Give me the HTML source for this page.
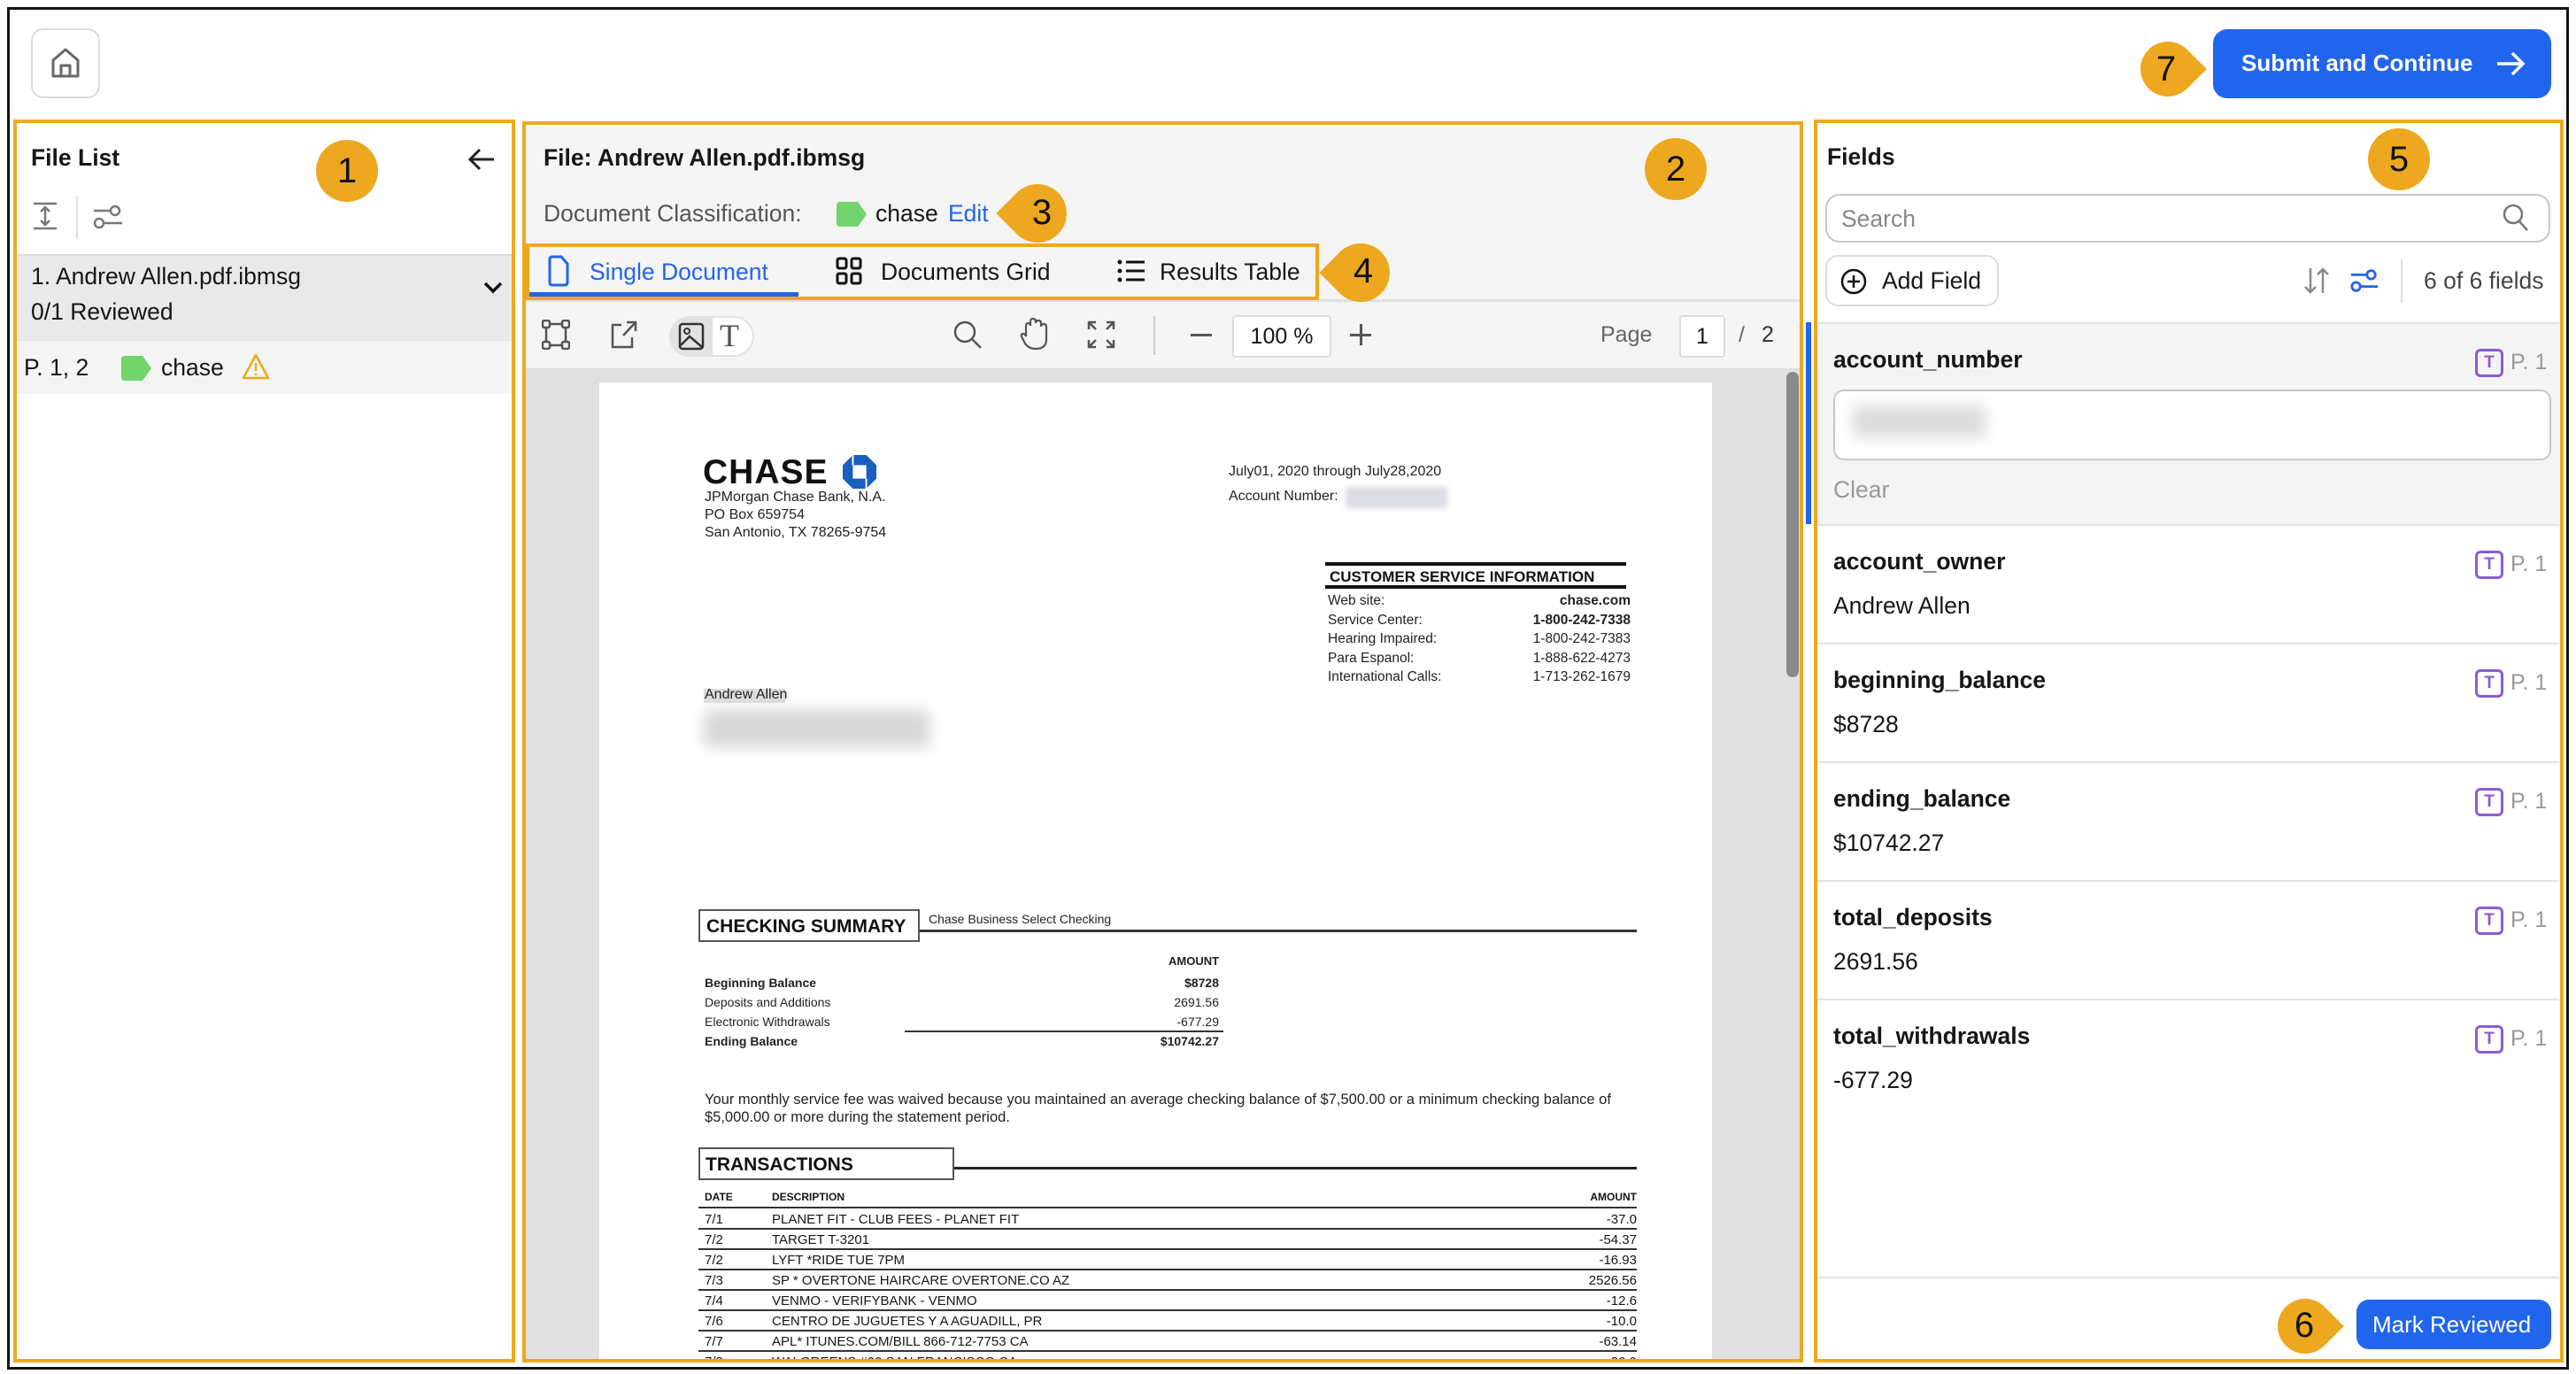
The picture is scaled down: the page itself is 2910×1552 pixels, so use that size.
<!DOCTYPE html>
<html><head><meta charset="utf-8">
<style>
*{box-sizing:border-box;margin:0;padding:0}
body{width:2910px;height:1552px;background:#fff;font-family:"Liberation Sans",Arial,sans-serif;color:#161616;position:relative;overflow:hidden}
.a{position:absolute}
.t{position:absolute;white-space:nowrap}
.b{font-weight:bold}
.badge{position:absolute;width:70px;height:70px;background:#EDA81F;border-radius:50%;font-size:40px;color:#111;display:flex;align-items:center;justify-content:center}
.tl{position:absolute;width:66px;height:66px;background:#EDA81F;border-radius:50% 50% 50% 0;transform:rotate(45deg)}
.tr{position:absolute;width:62px;height:62px;background:#EDA81F;border-radius:50% 0 50% 50%;transform:rotate(45deg)}
.num{position:absolute;font-size:40px;color:#111;width:66px;text-align:center}
.doc{position:absolute;white-space:nowrap;font-family:"Liberation Sans",Arial,sans-serif;color:#222}
.row{position:absolute;left:2049px;width:846px;border-top:2px solid #e2e2e2}
.fl{position:absolute;left:22px;font-size:26.5px;font-weight:bold;color:#161616}
.fv{position:absolute;left:22px;font-size:26.5px;color:#161616}
.ti{position:absolute;left:751px;width:32px;height:32px;border:3px solid #8a5cd6;border-radius:6px;color:#8a5cd6;font-size:19px;font-weight:bold;text-align:center;line-height:26px}
.pg{position:absolute;left:792px;font-size:25px;color:#9a9a9a}
.tx{position:absolute;left:789px;width:1060px;height:23px;border-bottom:2px solid #333;font-size:15px}
.tx span{position:absolute;top:3px}
.ui{font-size:26.5px}
</style></head><body>
<div class="a" style="left:8px;top:8px;width:2894px;height:1539px;border:3px solid #111"></div>

<div class="a" style="left:35px;top:32px;width:78px;height:79px;border:2px solid #dcdcdc;border-radius:14px;background:#fff"></div>
<svg class="a" style="left:56px;top:52px" width="36" height="38" viewBox="0 0 36 38"><path d="M4 16 L18 4 L32 16 V34 H4 Z M13 34 V22 H23 V34" fill="none" stroke="#666" stroke-width="3" stroke-linejoin="round"/></svg>

<div class="a" style="left:2500px;top:33px;width:382px;height:78px;background:#2165EC;border-radius:16px"></div>
<div class="t b" style="left:2532px;top:56px;font-size:26px;color:#fff">Submit and Continue</div>
<svg class="a" style="left:2818px;top:56px" width="36" height="32" viewBox="0 0 36 32"><path d="M3 16 H32 M20 4 L32 16 L20 28" fill="none" stroke="#fff" stroke-width="3.5"/></svg>
<div class="tr" style="left:2418px;top:47px"></div><div class="num" style="left:2414px;top:56px">7</div>

<!-- LEFT PANEL -->
<div class="a" style="left:15px;top:135px;width:567px;height:1404px;border:4px solid #EDA81F;background:#fff"></div>
<div class="t b ui" style="left:35px;top:163px">File List</div>
<div class="badge" style="left:357px;top:158px">1</div>
<svg class="a" style="left:528px;top:166px" width="32" height="28" viewBox="0 0 32 28"><path d="M30 14 H4 M14 3 L3 14 L14 25" fill="none" stroke="#222" stroke-width="3"/></svg>
<svg class="a" style="left:36px;top:228px" width="30" height="32" viewBox="0 0 30 32"><path d="M2 2 H28 M2 30 H28 M15 7 V25 M10 11 L15 6 L20 11 M10 21 L15 26 L20 21" fill="none" stroke="#777" stroke-width="2.5"/></svg>
<div class="a" style="left:86px;top:222px;width:2px;height:48px;background:#e0e0e0"></div>
<svg class="a" style="left:104px;top:230px" width="36" height="30" viewBox="0 0 36 30"><circle cx="26" cy="8" r="5" fill="none" stroke="#777" stroke-width="2.5"/><circle cx="8" cy="22" r="5" fill="none" stroke="#777" stroke-width="2.5"/><path d="M2 8 H21 M13 22 H34" stroke="#777" stroke-width="2.5"/></svg>
<div class="a" style="left:19px;top:287px;width:559px;height:98px;background:#e9e9e9;border-top:2px solid #dcdcdc"></div>
<div class="t ui" style="left:35px;top:297px">1. Andrew Allen.pdf.ibmsg</div>
<div class="t ui" style="left:35px;top:337px">0/1 Reviewed</div>
<svg class="a" style="left:546px;top:318px" width="22" height="14" viewBox="0 0 22 14"><path d="M2 2 L11 11 L20 2" fill="none" stroke="#111" stroke-width="3.5"/></svg>
<div class="a" style="left:19px;top:385px;width:559px;height:60px;background:#f4f4f4"></div>
<div class="t ui" style="left:27px;top:400px">P. 1, 2</div>
<svg class="a" style="left:137px;top:402px" width="34" height="28" viewBox="0 0 34 28"><path d="M4 0 H24 L34 14 L24 28 H4 Q0 28 0 24 V4 Q0 0 4 0 Z" fill="#72d46c"/></svg>
<div class="t ui" style="left:182px;top:400px">chase</div>
<svg class="a" style="left:273px;top:399px" width="32" height="30" viewBox="0 0 32 30"><path d="M16 2 L30 28 H2 Z" fill="none" stroke="#EDA81F" stroke-width="2.5" stroke-linejoin="round"/><path d="M16 11 V20 M16 23 V25" stroke="#EDA81F" stroke-width="2.5"/></svg>

<!-- CENTER PANEL -->
<div class="a" style="left:590px;top:137px;width:1447px;height:1402px;border:4px solid #EDA81F;background:#f5f5f5"></div>
<div class="t b ui" style="left:614px;top:163px">File: Andrew Allen.pdf.ibmsg</div>
<div class="badge" style="left:1858px;top:156px">2</div>
<div class="t ui" style="left:614px;top:226px;color:#555">Document Classification:</div>
<svg class="a" style="left:945px;top:228px" width="34" height="28" viewBox="0 0 34 28"><path d="M4 0 H24 L34 14 L24 28 H4 Q0 28 0 24 V4 Q0 0 4 0 Z" fill="#72d46c"/></svg>
<div class="t ui" style="left:989px;top:226px">chase</div>
<div class="t ui" style="left:1071px;top:226px;color:#2165EC">Edit</div>
<div class="tl" style="left:1139px;top:208px"></div><div class="num" style="left:1144px;top:218px">3</div>

<div class="a" style="left:594px;top:338px;width:1439px;height:3px;background:#e0e0e0"></div>
<div class="a" style="left:594px;top:275px;width:896px;height:64px;border:4px solid #EDA81F"></div>
<div class="a" style="left:598px;top:330px;width:304px;height:5px;background:#2165EC"></div>
<svg class="a" style="left:618px;top:288px" width="26" height="36" viewBox="0 0 26 36"><path d="M3 5 Q3 2 6 2 H16 L23 10 V31 Q23 34 20 34 H6 Q3 34 3 31 Z" fill="none" stroke="#2165EC" stroke-width="3"/></svg>
<div class="t ui" style="left:666px;top:292px;color:#2165EC">Single Document</div>
<svg class="a" style="left:944px;top:290px" width="30" height="32" viewBox="0 0 30 32"><rect x="2" y="2" width="10" height="11" rx="2" fill="none" stroke="#111" stroke-width="3"/><rect x="18" y="2" width="10" height="11" rx="2" fill="none" stroke="#111" stroke-width="3"/><rect x="2" y="19" width="10" height="11" rx="2" fill="none" stroke="#111" stroke-width="3"/><rect x="18" y="19" width="10" height="11" rx="2" fill="none" stroke="#111" stroke-width="3"/></svg>
<div class="t ui" style="left:995px;top:292px">Documents Grid</div>
<svg class="a" style="left:1262px;top:292px" width="32" height="28" viewBox="0 0 32 28"><circle cx="3" cy="4" r="2.5" fill="#111"/><circle cx="3" cy="14" r="2.5" fill="#111"/><circle cx="3" cy="24" r="2.5" fill="#111"/><path d="M10 4 H31 M10 14 H31 M10 24 H31" stroke="#111" stroke-width="3"/></svg>
<div class="t ui" style="left:1310px;top:292px">Results Table</div>
<div class="tl" style="left:1504px;top:275px"></div><div class="num" style="left:1507px;top:284px">4</div>

<!-- toolbar -->
<svg class="a" style="left:612px;top:361px" width="32" height="34" viewBox="0 0 32 34"><rect x="5" y="5" width="22" height="24" fill="none" stroke="#555" stroke-width="2.5"/><rect x="1" y="1" width="8" height="8" rx="2" fill="#f5f5f5" stroke="#555" stroke-width="2.5"/><rect x="23" y="1" width="8" height="8" rx="2" fill="#f5f5f5" stroke="#555" stroke-width="2.5"/><rect x="1" y="25" width="8" height="8" rx="2" fill="#f5f5f5" stroke="#555" stroke-width="2.5"/><rect x="23" y="25" width="8" height="8" rx="2" fill="#f5f5f5" stroke="#555" stroke-width="2.5"/></svg>
<svg class="a" style="left:688px;top:361px" width="32" height="34" viewBox="0 0 32 34"><path d="M14 6 H4 V31 H26 V20 M16 18 L30 3 M20 3 H30 V13" fill="none" stroke="#555" stroke-width="2.5"/></svg>
<div class="a" style="left:756px;top:357px;width:96px;height:46px;background:#e2e2e2;border-radius:23px"></div>
<div class="a" style="left:805px;top:359px;width:45px;height:42px;background:#fff;border-radius:0 21px 21px 0"></div>
<svg class="a" style="left:766px;top:364px" width="30" height="32" viewBox="0 0 30 32"><rect x="2" y="2" width="26" height="28" rx="3" fill="none" stroke="#333" stroke-width="2.5"/><circle cx="10" cy="10" r="3" fill="none" stroke="#333" stroke-width="2"/><path d="M3 26 L13 16 L27 28" fill="none" stroke="#333" stroke-width="2.5"/></svg>
<div class="t" style="left:813px;top:358px;font-size:36px;color:#555;font-family:'Liberation Serif',serif">T</div>
<svg class="a" style="left:1076px;top:361px" width="34" height="34" viewBox="0 0 34 34"><circle cx="14" cy="14" r="11" fill="none" stroke="#555" stroke-width="2.5"/><path d="M22 22 L32 32" stroke="#555" stroke-width="2.5"/></svg>
<svg class="a" style="left:1152px;top:358px" width="32" height="38" viewBox="0 0 32 38"><path d="M7 22 V10 Q7 7 10 7 Q12 7 12 10 V5 Q12 2 15 2 Q18 2 18 5 V7 Q18 4 21 4 Q24 4 24 7 V11 Q24 8 27 8 Q30 8 30 11 V25 Q30 36 18 36 Q10 36 6 30 L2 22 Q1 19 4 19 Q6 19 7 22 Z" fill="none" stroke="#555" stroke-width="2.2"/></svg>
<svg class="a" style="left:1228px;top:362px" width="32" height="32" viewBox="0 0 32 32"><path d="M2 10 V2 H10 M2 2 L10 10 M22 2 H30 V10 M30 2 L22 10 M2 22 V30 H10 M2 30 L10 22 M30 22 V30 H22 M30 30 L22 22" fill="none" stroke="#555" stroke-width="2.5"/></svg>
<div class="a" style="left:1303px;top:357px;width:2px;height:44px;background:#ccc"></div>
<div class="a" style="left:1345px;top:377px;width:24px;height:3px;background:#555"></div>
<div class="a" style="left:1392px;top:356px;width:112px;height:48px;background:#fff;border:2px solid #ddd;border-radius:4px;font-size:25px;text-align:center;line-height:44px">100 %</div>
<div class="a" style="left:1525px;top:377px;width:24px;height:3px;background:#555"></div>
<div class="a" style="left:1536px;top:366px;width:3px;height:24px;background:#555"></div>
<div class="t" style="left:1808px;top:364px;font-size:25px;color:#666">Page</div>
<div class="a" style="left:1897px;top:356px;width:52px;height:48px;background:#fff;border:2px solid #ddd;border-radius:4px;font-size:25px;text-align:center;line-height:44px">1</div>
<div class="t" style="left:1964px;top:364px;font-size:25px;color:#666">/</div>
<div class="t" style="left:1990px;top:364px;font-size:25px;color:#333">2</div>

<!-- viewer -->
<div class="a" style="left:594px;top:416px;width:1439px;height:1119px;background:#e0e0e0;overflow:hidden">
<div class="a" style="left:1424px;top:4px;width:14px;height:345px;background:#8a8a8a;border-radius:7px"></div>
<div class="a" style="left:83px;top:16px;width:1257px;height:1103px;background:#fff"></div>
<div class="a" style="left:-594px;top:-416px;width:2910px;height:1552px">
<div class="doc b" style="left:794px;top:512px;font-size:39px;color:#111;letter-spacing:1px">CHASE</div>
<svg class="a" style="left:952px;top:514px" width="38" height="38" viewBox="0 0 40 40"><path d="M12 0 H28 L40 12 V28 L28 40 H12 L0 28 V12 Z" fill="#1a5fc0"/><rect x="12" y="12" width="16" height="16" fill="#fff"/><path d="M12 0 L12 12 M28 40 L28 28" stroke="#fff" stroke-width="2"/></svg>
<div class="doc" style="left:796px;top:552px;font-size:16px;line-height:20px">JPMorgan Chase Bank, N.A.<br>PO Box 659754<br>San Antonio, TX 78265-9754</div>
<div class="doc" style="left:1388px;top:524px;font-size:16px">July01, 2020 through July28,2020</div>
<div class="doc" style="left:1388px;top:552px;font-size:16px">Account Number:</div>
<div class="a" style="left:1520px;top:550px;width:115px;height:24px;background:#dcdce4;filter:blur(3px)"></div>

<div class="a" style="left:1497px;top:635px;width:340px;height:4px;background:#111"></div>
<div class="doc b" style="left:1502px;top:642px;font-size:17px;color:#111">CUSTOMER SERVICE INFORMATION</div>
<div class="a" style="left:1497px;top:661px;width:340px;height:4px;background:#111"></div>
<div class="doc" style="left:1500px;top:668px;font-size:15.5px;line-height:21.5px">Web site:<br>Service Center:<br>Hearing Impaired:<br>Para Espanol:<br>International Calls:</div>
<div class="doc" style="left:1700px;top:668px;width:142px;text-align:right;font-size:15.5px;line-height:21.5px"><b>chase.com</b><br><b>1-800-242-7338</b><br>1-800-242-7383<br>1-888-622-4273<br>1-713-262-1679</div>

<div class="a" style="left:795px;top:778px;width:92px;height:16px;background:#ddd"></div>
<div class="doc" style="left:796px;top:776px;font-size:16px">Andrew Allen</div>
<div class="a" style="left:795px;top:802px;width:255px;height:42px;background:#d8d8d8;filter:blur(8px)"></div>

<div class="a" style="left:789px;top:1027px;width:250px;height:37px;border:2px solid #555"></div>
<div class="doc b" style="left:798px;top:1035px;font-size:21px;color:#111">CHECKING SUMMARY</div>
<div class="doc" style="left:1049px;top:1030px;font-size:14px">Chase Business Select Checking</div>
<div class="a" style="left:1039px;top:1050px;width:810px;height:3px;background:#333"></div>
<div class="doc b" style="left:1320px;top:1078px;width:57px;text-align:right;font-size:13px">AMOUNT</div>
<div class="doc" style="left:796px;top:1099px;font-size:14px;line-height:22px"><b>Beginning Balance</b><br>Deposits and Additions<br>Electronic Withdrawals<br><b>Ending Balance</b></div>
<div class="doc" style="left:1277px;top:1099px;width:100px;text-align:right;font-size:14px;line-height:22px"><b>$8728</b><br>2691.56<br>-677.29<br><b>$10742.27</b></div>
<div class="a" style="left:1022px;top:1164px;width:360px;height:2px;background:#333"></div>

<div class="doc" style="left:796px;top:1232px;font-size:16.5px;line-height:20px">Your monthly service fee was waived because you maintained an average checking balance of $7,500.00 or a minimum checking balance of<br>$5,000.00 or more during the statement period.</div>

<div class="a" style="left:789px;top:1296px;width:289px;height:37px;border:2px solid #555"></div>
<div class="doc b" style="left:797px;top:1304px;font-size:21px;color:#111">TRANSACTIONS</div>
<div class="a" style="left:1078px;top:1318px;width:771px;height:3px;background:#222"></div>
<div class="tx" style="top:1342px;font-weight:bold;font-size:12px"><span style="left:7px">DATE</span><span style="left:83px">DESCRIPTION</span><span style="right:0">AMOUNT</span></div>
<div class="tx" style="top:1366px"><span style="left:7px">7/1</span><span style="left:83px">PLANET FIT - CLUB FEES - PLANET FIT</span><span style="right:0">-37.0</span></div>
<div class="tx" style="top:1389px"><span style="left:7px">7/2</span><span style="left:83px">TARGET T-3201</span><span style="right:0">-54.37</span></div>
<div class="tx" style="top:1412px"><span style="left:7px">7/2</span><span style="left:83px">LYFT *RIDE TUE 7PM</span><span style="right:0">-16.93</span></div>
<div class="tx" style="top:1435px"><span style="left:7px">7/3</span><span style="left:83px">SP * OVERTONE HAIRCARE  OVERTONE.CO AZ</span><span style="right:0">2526.56</span></div>
<div class="tx" style="top:1458px"><span style="left:7px">7/4</span><span style="left:83px">VENMO - VERIFYBANK - VENMO</span><span style="right:0">-12.6</span></div>
<div class="tx" style="top:1481px"><span style="left:7px">7/6</span><span style="left:83px">CENTRO DE JUGUETES Y A AGUADILL, PR</span><span style="right:0">-10.0</span></div>
<div class="tx" style="top:1504px"><span style="left:7px">7/7</span><span style="left:83px">APL* ITUNES.COM/BILL  866-712-7753 CA</span><span style="right:0">-63.14</span></div>
<div class="tx" style="top:1527px"><span style="left:7px">7/8</span><span style="left:83px">WALGREENS #00 SAN FRANCISCO CA</span><span style="right:0">-20.0</span></div>
</div>
</div>

<!-- RIGHT PANEL -->
<div class="a" style="left:2049px;top:135px;width:847px;height:1404px;border:4px solid #EDA81F;background:#fff"></div>
<div class="a" style="left:2040px;top:364px;width:6px;height:228px;background:#2165EC"></div>
<div class="t b ui" style="left:2064px;top:162px">Fields</div>
<div class="badge" style="left:2675px;top:145px">5</div>
<div class="a" style="left:2062px;top:219px;width:819px;height:55px;border:2px solid #c8c8c8;border-radius:16px"></div>
<div class="t ui" style="left:2080px;top:232px;color:#888">Search</div>
<svg class="a" style="left:2826px;top:229px" width="32" height="34" viewBox="0 0 32 34"><circle cx="13" cy="13" r="10" fill="none" stroke="#777" stroke-width="2.5"/><path d="M20 21 L29 31" stroke="#777" stroke-width="2.5"/></svg>
<div class="a" style="left:2062px;top:288px;width:196px;height:58px;border:2px solid #dcdcdc;border-radius:14px"></div>
<svg class="a" style="left:2078px;top:302px" width="32" height="32" viewBox="0 0 32 32"><circle cx="16" cy="16" r="13" fill="none" stroke="#111" stroke-width="2.5"/><path d="M16 9 V23 M9 16 H23" stroke="#111" stroke-width="2.5"/></svg>
<div class="t ui" style="left:2126px;top:302px">Add Field</div>
<svg class="a" style="left:2601px;top:301px" width="32" height="32" viewBox="0 0 32 32"><path d="M9 2 V29 M3 23 L9 29 L15 23 M23 30 V3 M17 9 L23 3 L29 9" fill="none" stroke="#888" stroke-width="2.5"/></svg>
<svg class="a" style="left:2654px;top:302px" width="34" height="30" viewBox="0 0 36 30"><circle cx="26" cy="8" r="5" fill="none" stroke="#2165EC" stroke-width="3"/><circle cx="8" cy="22" r="5" fill="none" stroke="#2165EC" stroke-width="3"/><path d="M2 8 H21 M13 22 H34" stroke="#2165EC" stroke-width="3"/></svg>
<div class="a" style="left:2712px;top:292px;width:2px;height:50px;background:#ddd"></div>
<div class="t ui" style="left:2738px;top:302px;color:#444">6 of 6 fields</div>

<div class="row" style="top:364px;height:228px;background:#f4f4f4;left:2053px;width:838px">
  <div class="fl" style="top:25px;left:18px">account_number</div>
  <div class="ti" style="top:28px;left:743px">T</div><div class="pg" style="top:29px;left:783px">P. 1</div>
  <div class="a" style="left:18px;top:74px;width:811px;height:80px;background:#fff;border:2px solid #c8c8c8;border-radius:12px"></div>
  <div class="a" style="left:40px;top:92px;width:150px;height:36px;background:#dcdcdc;filter:blur(8px)"></div>
  <div class="fv" style="top:172px;left:18px;color:#999">Clear</div>
</div>
<div class="row" style="top:592px;height:134px;left:2053px;width:838px"><div class="fl" style="top:25px;left:18px">account_owner</div><div class="ti" style="top:28px;left:743px">T</div><div class="pg" style="top:29px;left:783px">P. 1</div><div class="fv" style="top:75px;left:18px">Andrew Allen</div></div>
<div class="row" style="top:726px;height:134px;left:2053px;width:838px"><div class="fl" style="top:25px;left:18px">beginning_balance</div><div class="ti" style="top:28px;left:743px">T</div><div class="pg" style="top:29px;left:783px">P. 1</div><div class="fv" style="top:75px;left:18px">$8728</div></div>
<div class="row" style="top:860px;height:134px;left:2053px;width:838px"><div class="fl" style="top:25px;left:18px">ending_balance</div><div class="ti" style="top:28px;left:743px">T</div><div class="pg" style="top:29px;left:783px">P. 1</div><div class="fv" style="top:75px;left:18px">$10742.27</div></div>
<div class="row" style="top:994px;height:134px;left:2053px;width:838px"><div class="fl" style="top:25px;left:18px">total_deposits</div><div class="ti" style="top:28px;left:743px">T</div><div class="pg" style="top:29px;left:783px">P. 1</div><div class="fv" style="top:75px;left:18px">2691.56</div></div>
<div class="row" style="top:1128px;height:134px;left:2053px;width:838px"><div class="fl" style="top:25px;left:18px">total_withdrawals</div><div class="ti" style="top:28px;left:743px">T</div><div class="pg" style="top:29px;left:783px">P. 1</div><div class="fv" style="top:75px;left:18px">-677.29</div></div>
<div class="a" style="left:2053px;top:1442px;width:838px;height:2px;background:#e2e2e2"></div>
<div class="a" style="left:2662px;top:1468px;width:220px;height:56px;background:#2165EC;border-radius:14px"></div>
<div class="t" style="left:2680px;top:1481px;font-size:26px;color:#fff">Mark Reviewed</div>
<div class="tr" style="left:2573px;top:1467px"></div><div class="num" style="left:2570px;top:1475px">6</div>
</body></html>
